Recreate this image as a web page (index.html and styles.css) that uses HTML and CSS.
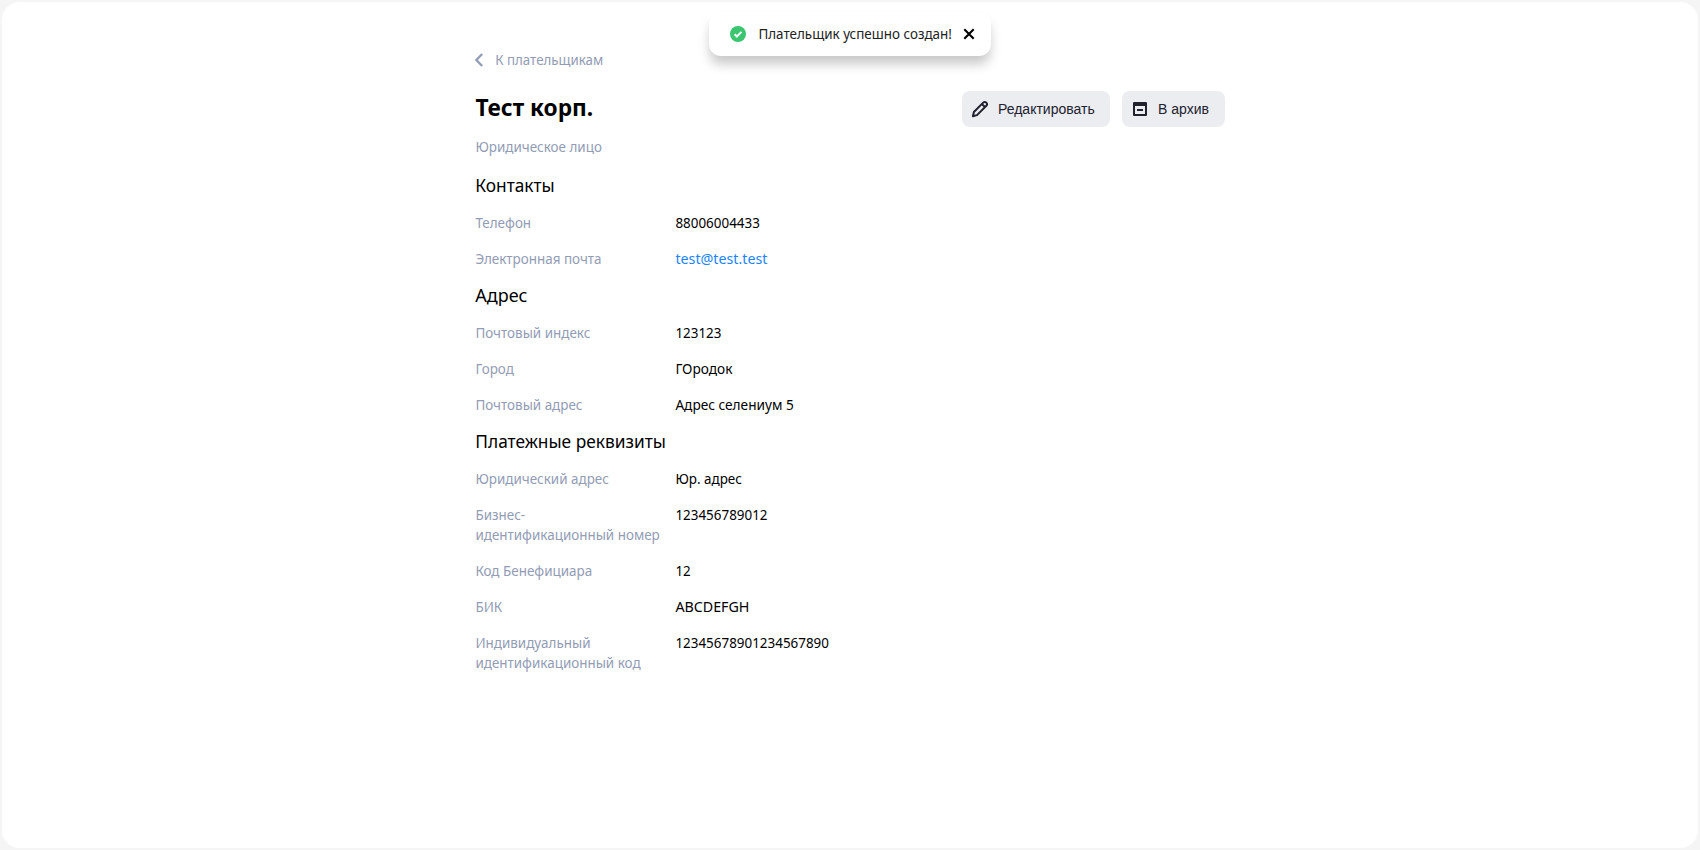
FILE: index.html
```html
<!DOCTYPE html>
<html lang="ru">
<head>
<meta charset="utf-8">
<title>Тест корп.</title>
<link rel="stylesheet" href="styles.css">
</head>
<body>
<main class="page">
  <div class="content">
    <a class="back"><svg width="8" height="14" viewBox="0 0 8 14"><path d="M7.2 1 1.4 7l5.8 6" fill="none" stroke="#929cb5" stroke-width="2.3"/></svg><span class="back-text narrow">К плательщикам</span></a>
    <header class="header">
      <h1 class="title narrow">Тест корп.</h1>
      <div class="actions">
        <button class="button button-edit"><svg width="18" height="18" viewBox="0 0 18 18" fill="none" stroke="#21222e" stroke-width="2" stroke-linejoin="round"><path d="M1.9 16.2 2.9 12 12.2 2.6a2 2 0 0 1 3.1 3.1L6 15.1ZM10.9 4l3.1 3.1"/></svg><span>Редактировать</span></button>
        <button class="button button-archive"><svg width="14" height="14" viewBox="0 0 14 14"><path fill="#21222e" fill-rule="evenodd" d="M1 0h12a1 1 0 0 1 1 1v12a1 1 0 0 1-1 1H1a1 1 0 0 1-1-1V1a1 1 0 0 1 1-1ZM2 4v8h10V4ZM4 7h6v2H4Z"/></svg><span>В архив</span></button>
      </div>
    </header>
    <p class="kind narrow">Юридическое лицо</p>

    <h2 class="section-title narrow first">Контакты</h2>
    <dl class="rows">
      <dt class="label narrow">Телефон</dt><dd class="value narrow">88006004433</dd>
      <dt class="label narrow">Электронная почта</dt><dd class="value narrow latin"><a class="link">test@test.test</a></dd>
    </dl>
    <h2 class="section-title narrow short">Адрес</h2>
    <dl class="rows">
      <dt class="label narrow">Почтовый индекс</dt><dd class="value narrow">123123</dd>
      <dt class="label narrow">Город</dt><dd class="value narrow cyrillic">ГОродок</dd>
      <dt class="label narrow">Почтовый адрес</dt><dd class="value narrow cyrillic">Адрес селениум 5</dd>
    </dl>
    <h2 class="section-title narrow">Платежные реквизиты</h2>
    <dl class="rows">
      <dt class="label narrow">Юридический адрес</dt><dd class="value narrow">Юр. адрес</dd>
      <dt class="label narrow">Бизнес-<br>идентификационный номер</dt><dd class="value narrow">123456789012</dd>
      <dt class="label narrow">Код Бенефициара</dt><dd class="value narrow">12</dd>
      <dt class="label narrow">БИК</dt><dd class="value narrow latin">ABCDEFGH</dd>
      <dt class="label narrow">Индивидуальный<br>идентификационный код</dt><dd class="value narrow">12345678901234567890</dd>
    </dl>
  </div>
</main>
<div class="toast">
  <svg width="16" height="16" viewBox="0 0 16 16"><circle cx="8" cy="8" r="8" fill="#3bc56f"/><path d="m4.6 8.3 2.3 2.2 4.6-4.6" fill="none" stroke="#fff" stroke-width="2"/></svg>
  <div class="toast-text"><span class="narrow">Плательщик успешно создан!</span></div>
  <svg width="12" height="12" viewBox="0 0 12 12"><path d="m1.3 1.3 9.4 9.4M10.7 1.3l-9.4 9.4" stroke="#000" stroke-width="2.1"/></svg>
</div>
</body>
</html>
```
FILE: styles.css
```css
* { box-sizing: border-box; }
body {
  margin: 0;
  height: 850px;
  padding: 2px;
  overflow: hidden;
  background: #f5f5f6;
  font-family: "Noto Sans", sans-serif;
  font-size: 15px;
  line-height: 20px;
  color: #000;
}
.page {
  height: 846px;
  border-radius: 18px;
  background: #fff;
}
.content { width: 750px; margin: 0 auto; padding-top: 48px; }
/* Condensed text cut */
.narrow {
  display: block;
  white-space: nowrap;
  transform: translate(0.4px, -1px) scaleX(0.895);
  transform-origin: 0 50%;
}
.narrow.latin { transform: translate(0.4px, -1px) scaleX(0.95); }
.narrow.cyrillic { transform: translate(0.4px, -1px) scaleX(0.91); }
.back { display: flex; align-items: center; height: 20px; color: #929cb5; }
.back-text.narrow { margin-left: 12px; transform: translate(0.2px, -1px) scaleX(0.887); }
.header { display: flex; justify-content: space-between; align-items: center; height: 36px; margin-top: 21px; }
.title.narrow { margin: 0; font-size: 24px; line-height: 32px; font-weight: 700; transform: translate(0.4px, -2px) scaleX(0.945); }
.actions { display: flex; gap: 12px; }
.button {
  display: flex;
  align-items: center;
  height: 36px;
  border: 0;
  border-radius: 8px;
  background: #ecedf1;
  color: #21222e;
  font: 14px/20px "Liberation Sans", sans-serif;
}
.button-edit { width: 148px; padding: 0 0 0 9px; gap: 9px; }
.button-archive { width: 103px; padding: 0 0 0 11px; gap: 11px; }
.kind { margin: 10px 0 0; color: #929cb5; }
.section-title.narrow { margin: 15px 0; font-size: 18px; line-height: 24px; font-weight: 400; transform: translate(0.3px, -1px) scaleX(0.962); }
.section-title.short { transform: translate(0.3px, -1px) scaleX(1); }
.section-title.first { margin-top: 17px; }
.rows { display: grid; grid-template-columns: 200px 1fr; row-gap: 16px; margin: 0; }
.label { color: #929cb5; }
.value { margin: 0; }
.link { color: #1a85ff; }
.toast {
  position: absolute;
  top: 12px;
  left: 709px;
  width: 282px;
  height: 44px;
  padding: 0 0 0 21px;
  display: flex;
  align-items: center;
  border-radius: 12px;
  background: #fff;
  color: #222;
  box-shadow: 0 9px 12px -1px rgba(0, 0, 0, 0.22);
}
.toast-text { width: 205px; margin-left: 12px; }
.toast svg { flex: none; }
```
